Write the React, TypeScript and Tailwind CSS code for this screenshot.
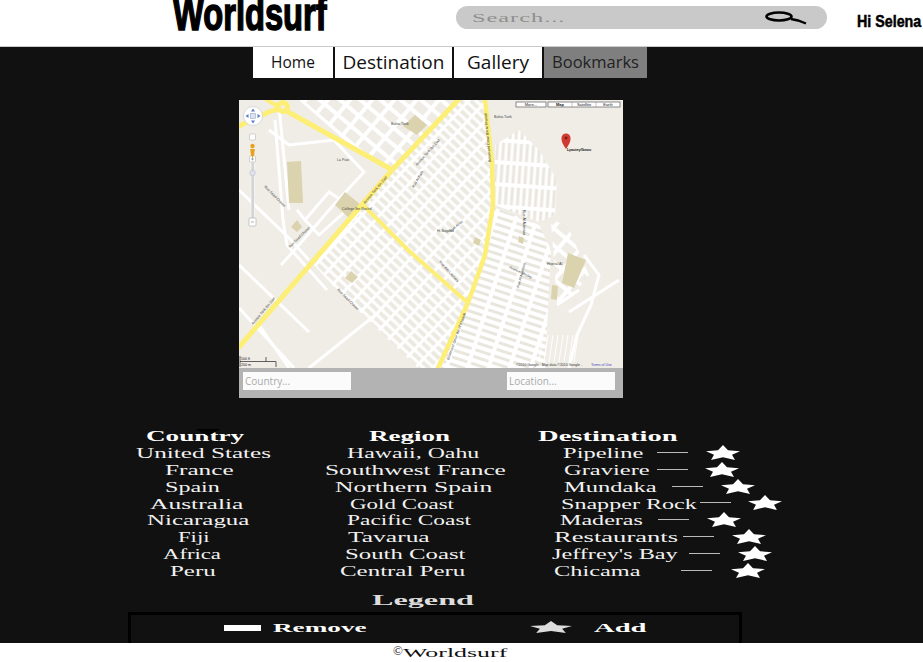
const navItems = [
  { label: "Home", className: "w-[80px] bg-white text-[15.5px]" },
  { label: "Destination", className: "w-[117px] ml-[2px] bg-white text-[19px]" },
  { label: "Gallery", className: "w-[88px] ml-[2px] bg-white text-[19px]" },
  { label: "Bookmarks", className: "w-[103px] ml-[2px] bg-[#7f7f7f] text-[16.5px] text-[#222]" },
];

const rows = [
  { country: "United States", cc: "pl-[136px]", cs: "scale-x-[1.8]", region: "Hawaii, Oahu", rc: "pl-[47px]", rs: "scale-x-[1.7]", dest: "Pipeline", dc: "pl-[33px] w-[127px]", ds: "scale-x-[1.75]", sc: "ml-[18px]" },
  { country: "France", cc: "pl-[165px]", cs: "scale-x-[1.8]", region: "Southwest France", rc: "pl-[25px]", rs: "scale-x-[1.81]", dest: "Graviere", dc: "pl-[34px] w-[127px]", ds: "scale-x-[1.75]", sc: "ml-[17px]" },
  { country: "Spain", cc: "pl-[165px]", cs: "scale-x-[1.72]", region: "Northern Spain", rc: "pl-[35px]", rs: "scale-x-[1.83]", dest: "Mundaka", dc: "pl-[34px] w-[142px]", ds: "scale-x-[1.75]", sc: "ml-[18px]" },
  { country: "Australia", cc: "pl-[150px]", cs: "scale-x-[1.82]", region: "Gold Coast", rc: "pl-[50px]", rs: "scale-x-[1.64]", dest: "Snapper Rock", dc: "pl-[31px] w-[170px]", ds: "scale-x-[1.72]", sc: "ml-[17px]" },
  { country: "Nicaragua", cc: "pl-[147px]", cs: "scale-x-[1.78]", region: "Pacific Coast", rc: "pl-[47px]", rs: "scale-x-[1.67]", dest: "Maderas", dc: "pl-[30px] w-[128px]", ds: "scale-x-[1.72]", sc: "ml-[18px]" },
  { country: "Fiji", cc: "pl-[178px]", cs: "scale-x-[1.62]", region: "Tavarua", rc: "pl-[48px]", rs: "scale-x-[1.82]", dest: "Restaurants", dc: "pl-[24px] w-[153px]", ds: "scale-x-[1.9]", sc: "ml-[18px]" },
  { country: "Africa", cc: "pl-[163px]", cs: "scale-x-[1.62]", region: "South Coast", rc: "pl-[45px]", rs: "scale-x-[1.77]", dest: "Jeffrey's Bay", dc: "pl-[22px] w-[159px]", ds: "scale-x-[1.73]", sc: "ml-[18px]" },
  { country: "Peru", cc: "pl-[170px]", cs: "scale-x-[1.78]", region: "Central Peru", rc: "pl-[40px]", rs: "scale-x-[1.78]", dest: "Chicama", dc: "pl-[24px] w-[151px]", ds: "scale-x-[1.74]", sc: "ml-[19px]" },
];

const Stretched = ({ children, className = "" }: { children: React.ReactNode; className?: string }) => (
  <span className={"inline-block origin-left whitespace-nowrap font-['Liberation_Serif',serif] " + className}>
    {children}
  </span>
);

const Star = ({ fill = "#ffffff" }: { fill?: string }) => (
  <svg width="34" height="15" viewBox="0 0 34 17" preserveAspectRatio="none" className="shrink-0">
    <polygon points="17,0 22,6 34,7 26,11 29,17 17,14 5,17 8,11 0,7 12,6" fill={fill} />
  </svg>
);

const Dash = () => <div className="h-px w-[31px] shrink-0 bg-[#bbbbbb]" />;

const parallel = (n: number, step: number) => Array.from({ length: n }, (_, i) => i * step);

const Label = ({ x, y, r = 0, children }: { x: number; y: number; r?: number; children: string }) => (
  <text
    x={x}
    y={y}
    fontSize="3.6"
    fontFamily="Liberation Sans, sans-serif"
    fill="#444"
    transform={r ? `rotate(${r} ${x} ${y})` : undefined}
  >
    {children}
  </text>
);

const MapDrawing = () => (
  <svg width="384" height="268" viewBox="0 0 384 268" className="block">
    <defs>
      <pattern id="gridA" width="13" height="7" patternUnits="userSpaceOnUse" patternTransform="rotate(43)">
        <rect width="13" height="7" fill="#ffffff" />
        <rect x="1" y="1.5" width="10" height="4" fill="#ece9e1" />
      </pattern>
      <pattern id="gridB" width="6" height="22" patternUnits="userSpaceOnUse" patternTransform="rotate(4)">
        <rect width="6" height="22" fill="#ffffff" />
        <rect x="1.5" y="2" width="3" height="18" fill="#e9e6de" />
      </pattern>
      <pattern id="gridC" width="20" height="7" patternUnits="userSpaceOnUse" patternTransform="rotate(18)">
        <rect width="20" height="7" fill="#ffffff" />
        <rect x="2" y="2" width="16" height="3" fill="#e9e6de" />
      </pattern>
      <pattern id="gridD" width="17" height="13" patternUnits="userSpaceOnUse" patternTransform="rotate(40)">
        <rect width="17" height="13" fill="#ffffff" />
        <rect x="2" y="2" width="13" height="9" fill="#efece6" />
      </pattern>
    </defs>
    <rect width="384" height="268" fill="#f0ede7" />

    {/* street blocks */}
    <polygon points="60,0 219,0 153,68 110,44" fill="url(#gridD)" />
    <polygon points="219,0 246,0 253,62 254,105 246,155 229,203 199,268 179,268 96,188 75,165 130,100" fill="url(#gridA)" />
    <polygon points="256,45 280,30 300,50 318,80 316,115 300,122 256,105" fill="url(#gridB)" />
    <polygon points="256,108 300,125 312,150 306,268 202,268 230,203 248,155" fill="url(#gridC)" />
    <polygon points="312,120 328,125 350,175 330,200 318,205" fill="url(#gridD)" />

    {/* west side streets */}
    <g stroke="#ffffff" strokeWidth="3" fill="none">
      <path d="M36 20 L44 120 L48 145 L88 190" />
      <path d="M0 90 L50 138 L70 160" />
      <path d="M40 6 L50 110" />
      <path d="M30 30 L50 45 L95 40 L125 72 L90 110 L60 145 L42 165" />
      <path d="M58 110 L66 120 L90 92 L120 112 L80 160" />
      <path d="M66 120 L80 135 L110 108" />
      <path d="M0 165 L70 232" />
      <path d="M0 208 L55 268" />
      <path d="M140 212 L70 268" />
      <path d="M20 225 L50 268" />
      <path d="M345 155 L360 175 L352 205 L338 235 L330 268" />
      <path d="M318 205 L340 190" />
      <path d="M330 212 L380 180" />
    </g>

    {/* beige areas */}
    <g fill="#dbd2ae">
      <polygon points="48,62 62,61 64,103 50,103" />
      <polygon points="106,92 122,105 110,118 96,105" />
      <polygon points="176,15 188,25 178,35 164,26" />
      <polygon points="329,153 347,160 335,188 323,183" />
      <polygon points="313,185 319,186 318,200 312,199" />
      <polygon points="112,171 119,177 113,183 106,178" />
      <polygon points="58,120 63,127 58,132 52,127" />
      <polygon points="236,137 242,140 240,146 234,143" />
      <polygon points="280,136 285,138 284,144 279,142" />
    </g>

    {/* main roads */}
    <g stroke="#fdee75" strokeLinecap="round" strokeLinejoin="round" fill="none">
      <path d="M0 247 L153 70 L219 0" strokeWidth="5" />
      <path d="M0 26 L30 12 L42 8 L150 68" strokeWidth="5" />
      <path d="M28 0 L42 8" strokeWidth="4" />
      <path d="M126 107 L169 150 L229 203" strokeWidth="4" />
      <path d="M246 0 L253 62 L254 105 L246 155 L229 203 L199 268" strokeWidth="4.5" />
    </g>
    <circle cx="44" cy="7" r="7" fill="#fdee75" />
    <circle cx="44" cy="7" r="2" fill="#f0ede7" />

    {/* labels */}
    <Label x="152" y="25">Bahia Tarik</Label>
    <Label x="98" y="61">La Paix</Label>
    <Label x="103" y="110">College Ibn Rochd</Label>
    <Label x="126" y="104" r={-50}>Avenue Tarik Ibn Ziad</Label>
    <Label x="178" y="66" r={-48}>Avenue Tarik Ibn Ziad</Label>
    <Label x="51" y="148" r={-45}>Rue Saad Chaoui</Label>
    <Label x="25" y="87" r={45}>Rue Saad Chaoui</Label>
    <Label x="14" y="225" r={-50}>Avenue Tarik Ibn Ziad</Label>
    <Label x="98" y="190" r={45}>Rue Saad Chaoui</Label>
    <Label x="200" y="162" r={48}>Rue des Lauriers</Label>
    <Label x="210" y="260" r={-70}>Boulevard Omar Ibn Al Khattab</Label>
    <Label x="252" y="62" r={-95}>Boulevard Omar Ibn Al Khattab</Label>
    <Label x="255" y="18">Bahia Tarik</Label>
    <Label x="284" y="110" r={90}>Rue Al Adarissa</Label>
    <Label x="280" y="188" r={-75}>Rue Al Adarissa</Label>
    <Label x="198" y="132">Hi Bagdad</Label>
    <Label x="308" y="165">Hopital Al</Label>
    <Label x="212" y="132" r={-40}>Rue Atlas</Label>
    <Label x="175" y="88" r={-60}>Rue Al Fath</Label>
    <Label x="270" y="168" r={25}>Avenue Moulay</Label>

    {/* extra small streets */}
    {parallel(8, 5).map((d) => (
      <line key={d} x1={300 + d} y1="262" x2={304 + d} y2="235" stroke="#ffffff" strokeWidth="1" />
    ))}

    {/* map type buttons */}
    <g fontFamily="Liberation Sans, sans-serif" fontSize="4" textAnchor="middle" fill="#222">
      <rect x="277" y="2" width="30" height="5" fill="#ffffff" stroke="#444" strokeWidth="0.6" />
      <text x="292" y="6">More...</text>
      <rect x="309" y="2" width="72" height="5" fill="#ffffff" stroke="#444" strokeWidth="0.6" />
      <line x1="333" y1="2" x2="333" y2="7" stroke="#888" strokeWidth="0.5" />
      <line x1="357" y1="2" x2="357" y2="7" stroke="#888" strokeWidth="0.5" />
      <text x="321" y="6" fontWeight="bold">Map</text>
      <text x="345" y="6">Satellite</text>
      <text x="369" y="6">Earth</text>
    </g>

    {/* pan and zoom controls */}
    <circle cx="14" cy="16" r="9.5" fill="#ffffff" stroke="#cccccc" strokeWidth="0.7" />
    <path d="M14 8.5 L12 11.5 H16 Z M14 23.5 L12 20.5 H16 Z M6.5 16 L9.5 14 V18 Z M21.5 16 L18.5 14 V18 Z" fill="#5a7fc7" />
    <rect x="11.5" y="13.5" width="5" height="5" fill="#dde3ee" stroke="#8a9bb8" strokeWidth="0.5" />
    <rect x="12" y="62" width="3.5" height="60" fill="#d4d4d4" stroke="#ffffff" strokeWidth="0.6" />
    <rect x="10.5" y="34" width="6" height="6" rx="1" fill="#ffffff" stroke="#999" strokeWidth="0.4" />
    <rect x="10.5" y="56" width="6" height="6" rx="1" fill="#ffffff" stroke="#999" strokeWidth="0.4" />
    <path d="M12 59 H15 M13.5 57.5 V60.5" stroke="#5a7fc7" strokeWidth="0.6" />
    <rect x="10" y="118" width="7" height="8" rx="1" fill="#ffffff" stroke="#999" strokeWidth="0.5" />
    <path d="M12 122 H15" stroke="#777" strokeWidth="0.6" />
    <circle cx="13.5" cy="73" r="2.8" fill="#dde3ee" stroke="#aab" strokeWidth="0.4" />
    <circle cx="13.5" cy="46" r="2.2" fill="#e8a020" />
    <path d="M11.2 49 H15.8 L15 56 H14 L13.5 60 L13 56 H12 Z" fill="#e8a020" />

    {/* marker */}
    <path d="M327 49 C323 43 322.5 41 322.5 38 A4.5 4.5 0 1 1 331.5 38 C331.5 41 331 43 327 49 Z" fill="#d13a32" />
    <circle cx="327" cy="38" r="1.4" fill="#7c1a15" />
    <text x="328" y="51" fontSize="3.6" fontWeight="bold" fontFamily="Liberation Sans, sans-serif" fill="#111">
      Lyautey/Ibnou
    </text>

    {/* scale and copyright */}
    <g fill="#222" fontFamily="Liberation Sans, sans-serif" fontSize="3.6">
      <text x="2" y="260">500 ft</text>
      <text x="2" y="266">200 m</text>
    </g>
    <path d="M1 256 V267 M1 261.5 H37 V267 M27 257 V261.5" stroke="#222" strokeWidth="0.7" fill="none" />
    <text x="277" y="266" fontSize="3.5" fontFamily="Liberation Sans, sans-serif" fill="#333">
      ©2010 Google - Map data ©2010 Google -
    </text>
    <text x="352" y="266" fontSize="3.5" fontFamily="Liberation Sans, sans-serif" fill="#4444bb">
      Terms of Use
    </text>
  </svg>
);

export default function App() {
  return (
    <div className="flex h-[662px] flex-col overflow-hidden bg-white">
      <header className="flex h-[47px] shrink-0 border-b border-[#cccccc] bg-white">
        <div className="relative ml-[173px] h-[29px] w-[283px]">
          <span className="absolute bottom-[-8px] left-0 origin-left scale-x-[0.71] whitespace-nowrap font-['Liberation_Sans',sans-serif] text-[46px] font-bold leading-none text-black [-webkit-text-stroke:1.6px_black]">
            Worldsurf
          </span>
        </div>
        <div className="mt-[6px] flex h-[23px] w-[371px] items-center rounded-full bg-[#c9c9c9] pl-4 text-[13px] text-[#8f8f8f]">
          <Stretched className="scale-x-[1.88] tracking-[0.5px]">Search...</Stretched>
          <svg width="42" height="14" viewBox="0 0 42 14" className="ml-auto mr-[20px]">
            <ellipse cx="14" cy="5.5" rx="12.5" ry="4" fill="none" stroke="#000" strokeWidth="2.6" />
            <path d="M26 8 L33 9.5 L41 12.5" stroke="#000" strokeWidth="2.4" fill="none" />
          </svg>
        </div>
        <div className="ml-[30px] mt-[9px] w-[66px] overflow-visible">
          <span className="inline-block origin-left scale-x-[0.84] whitespace-nowrap font-['Liberation_Sans',sans-serif] text-[17px] font-bold leading-[20px] text-black [-webkit-text-stroke:0.5px_black]">
            Hi Selena
          </span>
        </div>
      </header>

      <main className="min-h-0 flex-1 overflow-hidden bg-[#111111]">
        <nav className="ml-[253px] flex h-[31px] font-['Open_Sans',sans-serif] text-[#111]">
          {navItems.map((item) => (
            <div key={item.label} className={"flex items-center justify-center " + item.className}>
              {item.label}
            </div>
          ))}
        </nav>

        <section className="ml-[239px] mt-[22px] w-[384px]">
          <MapDrawing />
          <div className="flex h-[30px] items-start justify-between bg-[#b3b3b3] pl-1 pr-2 pt-1 font-['Open_Sans',sans-serif] text-[10px] text-[#aaa]">
            <div className="flex h-[18px] w-[108px] items-center bg-[#fbfbfb] px-[2px]">Country...</div>
            <div className="flex h-[18px] w-[108px] items-center bg-[#fbfbfb] px-[2px]">Location...</div>
          </div>
        </section>

        <section className="relative mt-[29px] text-[14px] leading-[17px] text-[#f2f2f2]">
          <div className="flex h-[17px] font-bold text-white">
            <div className="w-[300px] shrink-0 pl-[146px]">
              <Stretched className="scale-x-[1.94]">Country</Stretched>
            </div>
            <div className="w-[230px] shrink-0 pl-[69px]">
              <Stretched className="scale-x-[1.93]">Region</Stretched>
            </div>
            <div className="pl-[8px]">
              <Stretched className="scale-x-[2.04]">Destination</Stretched>
            </div>
          </div>
          <div className="absolute left-[196px] top-[2px] h-0 w-0 border-x-[12px] border-t-[7px] border-x-transparent border-t-black" />
          {rows.map((row) => (
            <div key={row.country} className="flex h-[16.85px]">
              <div className={"w-[300px] shrink-0 " + row.cc}>
                <Stretched className={row.cs}>{row.country}</Stretched>
              </div>
              <div className={"w-[230px] shrink-0 " + row.rc}>
                <Stretched className={row.rs}>{row.region}</Stretched>
              </div>
              <div className={"shrink-0 " + row.dc}>
                <Stretched className={row.ds}>{row.dest}</Stretched>
              </div>
              <div className="flex items-center">
                <Dash />
              </div>
              <div className={"flex items-center " + row.sc}>
                <Star />
              </div>
            </div>
          ))}
        </section>

        <section className="mt-[12px]">
          <div className="ml-[372px] h-[17px] text-[14px] font-bold leading-[17px] text-[#dddddd]">
            <Stretched className="scale-x-[2.3]">Legend</Stretched>
          </div>
          <div className="ml-[128px] mt-[4px] flex h-[60px] w-[614px] border-[3px] border-black pt-[4px] text-[13px] font-bold text-white">
            <div className="ml-[93px] mt-[6px] h-[6px] w-[37px] bg-white" />
            <div className="ml-[12px] leading-[17px]">
              <Stretched className="scale-x-[2.09]">Remove</Stretched>
            </div>
            <div className="ml-[212px]">
              <svg width="42" height="12" viewBox="0 0 34 17" preserveAspectRatio="none" className="mt-[2px]">
                <polygon points="17,0 22,6 34,7 26,11 29,17 17,14 5,17 8,11 0,7 12,6" fill="#dddddd" />
              </svg>
            </div>
            <div className="ml-[22px] leading-[17px]">
              <Stretched className="scale-x-[2.2]">Add</Stretched>
            </div>
          </div>
        </section>
      </main>

      <footer className="flex h-[19px] shrink-0 items-center bg-white pl-[393px] text-[13px] text-[#111]">
        <span className="mb-1 font-['Liberation_Serif',serif] text-[13px]">©</span>
        <Stretched className="scale-x-[1.99]">Worldsurf</Stretched>
      </footer>
    </div>
  );
}
